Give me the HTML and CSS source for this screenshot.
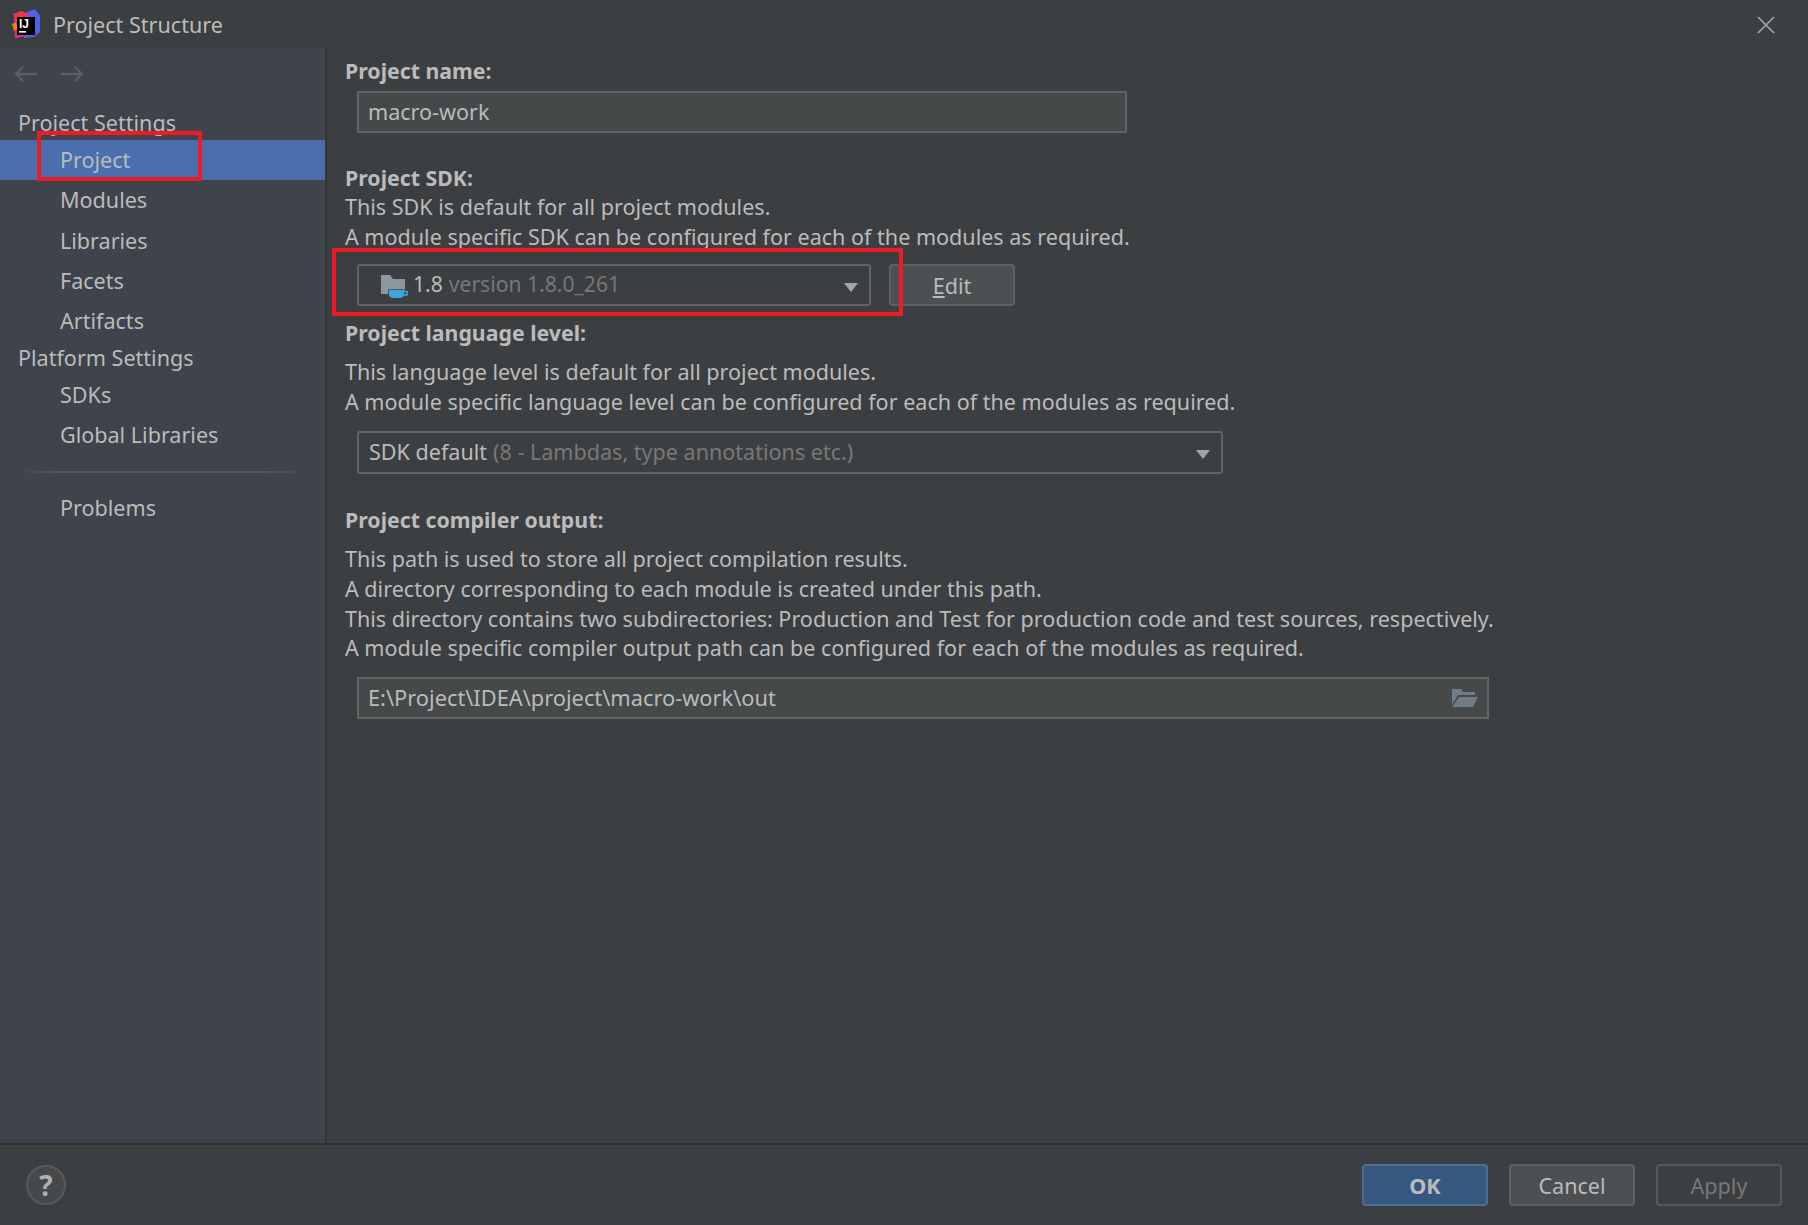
FILE: index.html
```html
<!DOCTYPE html>
<html lang="en">
<head>
<meta charset="utf-8">
<title>Project Structure</title>
<link rel="stylesheet" href="styles.css">
</head>
<body>
<div class="dialog">
  <header class="titlebar">
    <svg class="logo" viewBox="0 0 32 32" width="32" height="32">
      <path d="M17 4 L25 1 L30 8 L30 24 L24 29 L14 30 Z" fill="#4f62e6"/>
      <path d="M4 8 L10 3 L18 5 L18 28 L5 30 Z" fill="#dd2e80"/>
      <path d="M2 16 L6 14 L8 21 L4 23 Z" fill="#f97a12"/>
      <path d="M3 6 L12 3 L17 7 L7 14 Z" fill="#f0364f"/>
      <rect x="7" y="9" width="18" height="18" fill="#000"/>
      <rect x="9" y="23" width="7" height="1.6" fill="#fff"/>
      <text x="9" y="19.5" class="logo-text">IJ</text>
    </svg>
    <span class="title">Project Structure</span>
    <svg class="close" viewBox="0 0 18 18" width="18" height="18"><path d="M1 1 L17 17 M17 1 L1 17" stroke="#a5a8aa" stroke-width="1.6" fill="none"/></svg>
  </header>
  <div class="main">
    <aside class="sidebar">
      <div class="nav">
        <svg viewBox="0 0 24 16" width="24" height="16"><path d="M23 8 H2 M9 1 L2 8 L9 15" stroke="#5b5e60" stroke-width="2.4" fill="none"/></svg>
        <svg viewBox="0 0 24 16" width="24" height="16"><path d="M1 8 H22 M15 1 L22 8 L15 15" stroke="#5b5e60" stroke-width="2.4" fill="none"/></svg>
      </div>
      <div class="group first">Project Settings</div>
      <div class="item selected">Project</div>
      <div class="item">Modules</div>
      <div class="item libs">Libraries</div>
      <div class="item">Facets</div>
      <div class="item">Artifacts</div>
      <div class="group second">Platform Settings</div>
      <div class="item">SDKs</div>
      <div class="item">Global Libraries</div>
      <div class="sep"></div>
      <div class="item">Problems</div>
      <div class="mark mark-project"></div>
    </aside>
    <main class="content">
      <div class="label l-name">Project name:</div>
      <div class="field f-name"><span class="up">macro-work</span></div>

      <div class="label l-sdk">Project SDK:</div>
      <p class="desc lift">This SDK is default for all project modules.</p>
      <p class="desc lift">A module specific SDK can be configured for each of the modules as required.</p>
      <div class="sdk-row">
        <div class="combo c-sdk">
          <svg class="sdk-icon" viewBox="0 0 27 23" width="27" height="23">
            <path d="M0 0 H9 L12 4 H24 V19 H0 Z" fill="#8c979e"/>
            <path d="M8 15 H23 V19 Q23 23 19 23 H12 Q8 23 8 19 Z" fill="#3ea5dc" stroke="#3c3f41" stroke-width="1.5" paint-order="stroke"/>
            <path d="M23 16.5 H26 V20 H22" fill="none" stroke="#3ea5dc" stroke-width="1.6"/>
          </svg>
          <span class="val">1.8</span><span class="muted">version 1.8.0_261</span>
          <span class="arrow"></span>
        </div>
        <div class="btn edit"><span class="mn">E</span>dit</div>
      </div>

      <div class="label l-lang">Project language level:</div>
      <p class="desc first-desc">This language level is default for all project modules.</p>
      <p class="desc">A module specific language level can be configured for each of the modules as required.</p>
      <div class="combo c-lang">
        <span class="val up">SDK default</span><span class="muted up">(8 - Lambdas, type annotations etc.)</span>
        <span class="arrow"></span>
      </div>

      <div class="label l-out">Project compiler output:</div>
      <p class="desc first-desc">This path is used to store all project compilation results.</p>
      <p class="desc">A directory corresponding to each module is created under this path.</p>
      <p class="desc">This directory contains two subdirectories: Production and Test for production code and test sources, respectively.</p>
      <p class="desc lift">A module specific compiler output path can be configured for each of the modules as required.</p>
      <div class="field f-out">
        <span class="up">E:\Project\IDEA\project\macro-work\out</span>
        <svg class="open" viewBox="0 0 28 20" width="28" height="20">
          <path d="M1 1 H10 L12 4 H24 V7 H7 L1 17 Z" fill="#6f7d85"/>
          <path d="M8 9 H27 L22 19 H1 Z" fill="#6f7d85"/>
        </svg>
      </div>
      <div class="mark mark-sdk"></div>
    </main>
  </div>
  <footer class="footer">
    <div class="help">?</div>
    <div class="actions">
      <div class="btn ok">OK</div>
      <div class="btn cancel">Cancel</div>
      <div class="btn apply">Apply</div>
    </div>
  </footer>
</div>
</body>
</html>
```
FILE: styles.css
```css
* { box-sizing: border-box; }
html, body { margin: 0; height: 100%; }
body { background: #3c3f41; color: #bbbbbb; font-family: "Noto Sans", "Open Sans", sans-serif; font-size: 21.55px; }
.dialog { width: 1808px; height: 1225px; display: flex; flex-direction: column; overflow: hidden; }

.titlebar { height: 48px; flex: none; display: flex; align-items: center; padding: 1px 33px 0 10px; }
.logo { margin-right: 11px; flex: none; margin-top: -1px; }
.logo-text { font-family: "Liberation Sans", sans-serif; font-size: 12px; font-weight: 700; fill: #fff; }
.title { flex: 1; }
.close { flex: none; }

.main { flex: 1; display: flex; min-height: 0; }
.sidebar { position: relative; width: 327px; flex: none; background: #3e434c; border-right: 2px solid #333537; }
.nav { height: 50px; display: flex; gap: 22px; align-items: center; padding: 2px 0 0 14px; }
.group { padding-left: 18px; line-height: 30px; }
.group.first { height: 42px; padding-top: 10px; }
.group.second { height: 34px; padding-top: 2px; }
.item { height: 40px; line-height: 40px; padding-left: 60px; }
.item.selected { background: #4b6eaf; }
.item.libs { margin-top: 1px; }
.sep { height: 2px; margin: 16px 16px 15px; background: linear-gradient(90deg, #3e434c, #54565a 15%, #54565a 85%, #3e434c); }

.content { position: relative; flex: 1; padding-left: 18px; }
.label { font-weight: 700; line-height: 30px; height: 30px; font-size: 21.3px; }
.l-name { margin-top: 8px; }
.l-sdk { margin-top: 30px; }
.l-lang { margin-top: 12px; }
.l-out { margin-top: 31px; }
.desc { margin: 0; line-height: 30px; height: 30px; white-space: nowrap; }
.lift { position: relative; top: -1px; }
.first-desc { margin-top: 9px; }
.up { position: relative; top: -1px; }

.field { height: 42px; margin-left: 12px; background: #45494a; border: 2px solid #646464; display: flex; align-items: center; justify-content: space-between; padding: 0 8px 0 9px; }
.f-name { width: 770px; margin-top: 5px; }
.f-out { width: 1132px; margin-top: 13px; font-size: 21.8px; }

.sdk-row { display: flex; gap: 18px; margin: 11px 0 0 12px; }
.combo { position: relative; height: 42px; display: flex; align-items: center; border: 2px solid #646464; border-radius: 3px; background: #3c3f41; padding-left: 10px; white-space: nowrap; }
.c-sdk { width: 514px; padding-left: 22px; font-size: 21.1px; }
.c-sdk .val, .c-sdk .muted { position: relative; top: -2px; }
.c-lang { width: 866px; height: 43px; margin: 14px 0 0 12px; }
.sdk-icon { margin: 2px 5px 0 0; flex: none; }
.val { margin-right: 6px; }
.muted { color: #787878; }
.arrow { position: absolute; right: 11px; top: 17px; width: 0; height: 0; border-left: 7.5px solid transparent; border-right: 7.5px solid transparent; border-top: 9px solid #a3a5a7; }

.btn { width: 126px; height: 42px; border: 2px solid #5e6060; border-radius: 4px; background: #4c5052; display: flex; align-items: center; justify-content: center; }
.mn { text-decoration: underline; }

.mark { position: absolute; border: 4px solid #ed1c24; pointer-events: none; }
.mark-project { left: 37px; top: 83px; width: 165px; height: 50px; }
.mark-sdk { left: 5px; top: 200px; width: 571px; height: 68px; }

.footer { height: 82px; flex: none; border-top: 2px solid #323232; display: flex; align-items: center; justify-content: space-between; padding: 0 26px; }
.help { width: 40px; height: 40px; border-radius: 50%; background: #46494b; border: 2px solid #58595b; display: flex; align-items: center; justify-content: center; font-weight: 700; font-size: 28px; color: #aeb0b1; }
.actions { display: flex; gap: 20px; }
.ok { background: #365880; border-color: #4c708c; font-weight: 700; }
.cancel { margin-left: 1px; }
.apply { background: #3c3f41; color: #787878; margin-left: 1px; border-color: #55585a; }
```
